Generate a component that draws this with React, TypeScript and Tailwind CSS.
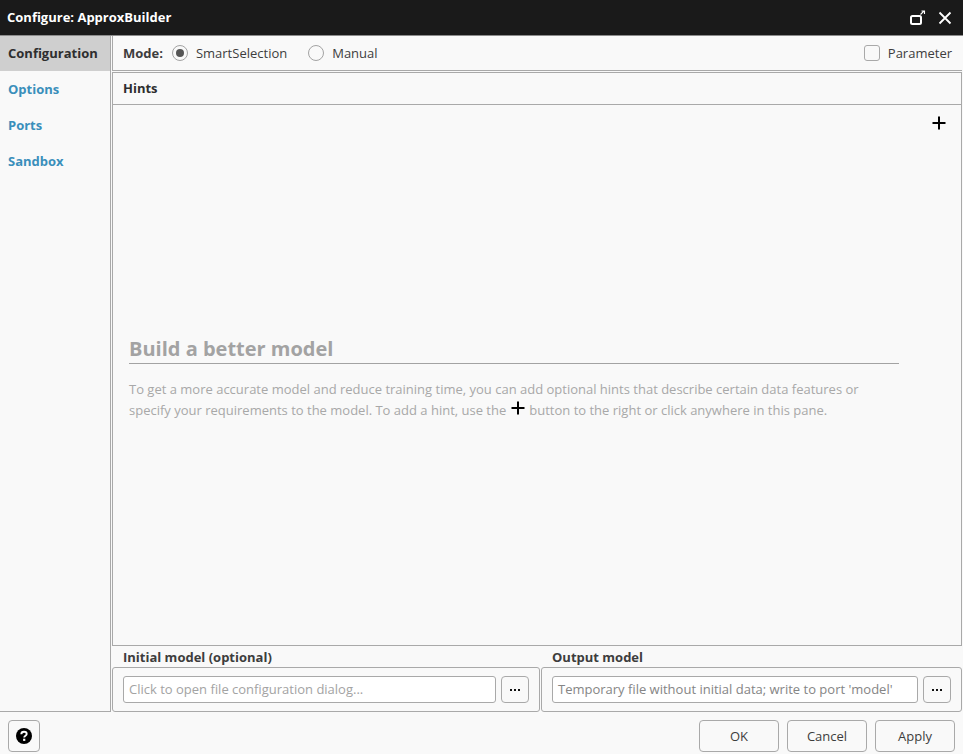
import React from "react";

function Plus({ className }: { className: string }) {
  return (
    <svg className={className} width="14" height="14" viewBox="0 0 14 14">
      <path d="M7 0.5V13.5M0.5 7H13.5" stroke="#000" strokeWidth="2" fill="none" />
    </svg>
  );
}

function Radio({ checked }: { checked?: boolean }) {
  return (
    <span className="w-4 h-4 rounded-full border border-[#a3a3a3] bg-[#f9f9f9] flex items-center justify-center">
      {checked && <span className="w-2 h-2 rounded-full bg-[#555]" />}
    </span>
  );
}

function FileField({ label, placeholder, dark, className }: { label: string; placeholder: string; dark?: boolean; className: string }) {
  return (
    <div className={`min-w-0 flex flex-col ${className}`}>
      <div className="h-[21px] pl-[11px] text-[13px] leading-[23px] font-bold text-[#3d3d3d]">{label}</div>
      <div className="h-[45px] border border-[#a9a9a9] rounded-[3px] flex items-center pl-[10px] pr-[10px] gap-[5px]">
        <div className={`flex-1 min-w-0 h-[27px] border border-[#a9a9a9] rounded-[3px] bg-white pl-[5px] text-[13px] leading-[25px] whitespace-nowrap overflow-hidden ${dark ? "text-[#858585]" : "text-[#a3a3a3]"}`}>
          {placeholder}
        </div>
        <div className="w-[28px] h-[27px] border border-[#a9a9a9] rounded-[4px] flex items-center justify-center gap-[2px]">
          <span className="w-[2px] h-[2px] bg-[#111]" />
          <span className="w-[2px] h-[2px] bg-[#111]" />
          <span className="w-[2px] h-[2px] bg-[#111]" />
        </div>
      </div>
    </div>
  );
}

function Btn({ children }: { children: React.ReactNode }) {
  return (
    <div className="w-[80px] h-[32px] border border-[#a9a9a9] rounded-[4px] flex items-center justify-center pt-[2px] text-[13px] text-[#3d3d3d]">
      {children}
    </div>
  );
}

export default function App() {
  return (
    <div className="w-[963px] h-[754px] bg-[#f9f9f9] flex flex-col overflow-hidden font-['Open_Sans',sans-serif] text-[13px] text-[#3d3d3d]">
      <div className="h-[36px] shrink-0 bg-[#1a1a1a] border-b border-[#8c8c8c] flex items-center pl-[7px] pr-[11px] justify-between">
        <span className="text-white font-bold text-[13px]">Configure: ApproxBuilder</span>
        <div className="flex items-center gap-[12px]">
          <svg width="17" height="17" viewBox="0 0 17 17">
            <rect x="2" y="7" width="10" height="8" rx="1.5" fill="none" stroke="#fff" strokeWidth="2" />
            <path d="M11.5 5.5L15 2M12.5 2H15.5V5" fill="none" stroke="#fff" strokeWidth="1.1" />
          </svg>
          <svg width="14" height="14" viewBox="0 0 14 14">
            <path d="M1.5 1.5L12.5 12.5M12.5 1.5L1.5 12.5" stroke="#fff" strokeWidth="1.8" fill="none" />
          </svg>
        </div>
      </div>
      <div className="h-[676px] shrink-0 flex">
        <div className="w-[111px] shrink-0 border-r border-b border-[#a9a9a9] font-bold">
          <div className="h-[35px] bg-[#cfcfcf] pl-[8px] leading-[35px] text-[#2e2e2e]">Configuration</div>
          <div className="h-[36px] pl-[8px] leading-[36px] text-[#3a8fbb]">Options</div>
          <div className="h-[36px] pl-[8px] leading-[36px] text-[#3a8fbb]">Ports</div>
          <div className="h-[36px] pl-[8px] leading-[36px] text-[#3a8fbb]">Sandbox</div>
        </div>
        <div className="flex-1 min-w-0 pl-px pr-px flex flex-col">
          <div className="h-[35px] shrink-0 border-b border-l border-[#a9a9a9] flex items-center pl-[10px] pr-[10px] leading-[36px]">
            <span className="font-bold mr-[9px]">Mode:</span>
            <Radio checked />
            <span className="ml-[8px] mr-[21px]">SmartSelection</span>
            <Radio />
            <span className="ml-[8px]">Manual</span>
            <span className="ml-auto w-4 h-4 border border-[#a9a9a9] rounded-[3px]" />
            <span className="ml-[8px]">Parameter</span>
          </div>
          <div className="h-[574px] mt-px shrink-0 border border-[#a9a9a9] flex flex-col relative">
            <div className="h-[32px] shrink-0 border-b border-[#a9a9a9] pl-[10px] leading-[31px] font-bold text-[#2e2e2e]">Hints</div>
            <Plus className="absolute right-[15px] top-[43px]" />
            <div className="flex-1 flex flex-col justify-start pt-[227px] pl-[16px] pr-[62px]">
              <div className="h-[32px] border-b border-[#a3a3a3] text-[20px] leading-[34px] font-bold text-[#a3a3a3]">Build a better model</div>
              <div className="mt-[15px] text-[13px] leading-[21px] text-[#a8a8a8] w-[740px]">
                <div className="whitespace-nowrap">To get a more accurate model and reduce training time, you can add optional hints that describe certain data features or</div>
                <div className="whitespace-nowrap flex items-center">
                  specify your requirements to the model. To add a hint, use the
                  <Plus className="ml-[5px] mr-[4px] -mt-[6px]" />
                  button to the right or click anywhere in this pane.
                </div>
              </div>
            </div>
          </div>
          <div className="flex gap-px">
            <FileField className="w-[428px] shrink-0" label="Initial model (optional)" placeholder="Click to open file configuration dialog..." />
            <FileField className="flex-1" label="Output model" placeholder="Temporary file without initial data; write to port 'model'" dark />
          </div>
        </div>
      </div>
      <div className="flex-1 flex items-center pl-[8px] pr-[8px] pt-[6px] gap-[8px]">
        <div className="w-[32px] h-[32px] border border-[#a9a9a9] rounded-[4px] flex items-center justify-center mr-auto">
          <svg width="16" height="16" viewBox="0 0 16 16">
            <circle cx="8" cy="8" r="8" fill="#000" />
            <path d="M5.3 6.2C5.3 4.6 6.5 3.7 8 3.7C9.6 3.7 10.7 4.6 10.7 6C10.7 7.7 8.2 7.7 8.2 9.4" fill="none" stroke="#fff" strokeWidth="1.9" />
            <rect x="7.1" y="10.7" width="2.2" height="2.2" fill="#fff" />
          </svg>
        </div>
        <Btn>OK</Btn>
        <Btn>Cancel</Btn>
        <Btn>Apply</Btn>
      </div>
    </div>
  );
}
